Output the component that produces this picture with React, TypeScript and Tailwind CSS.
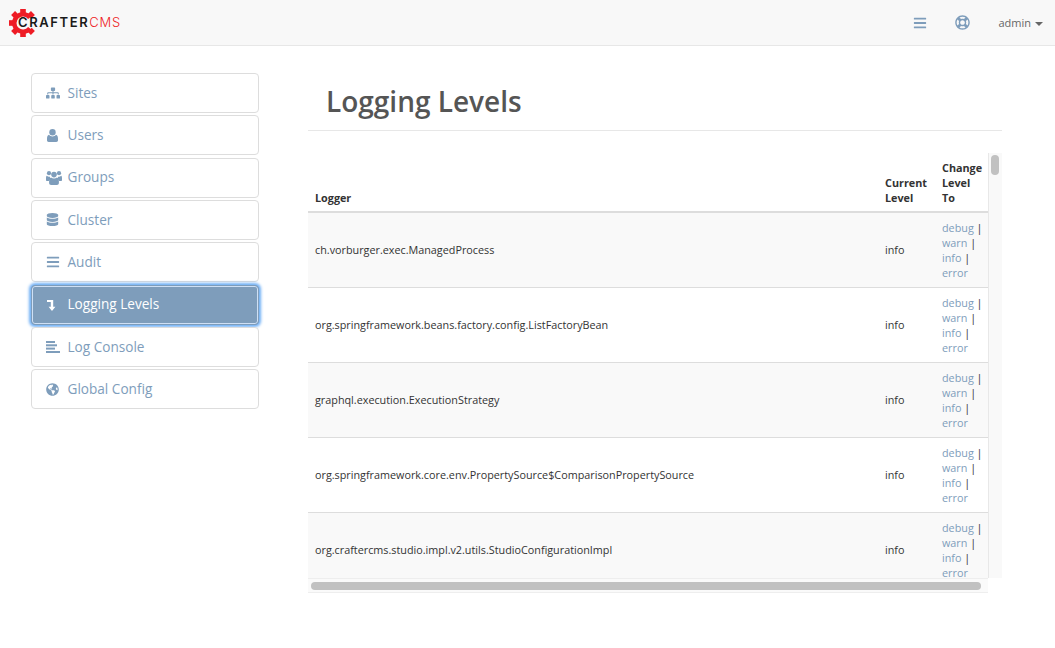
import React from "react";
import { FaSitemap, FaDatabase, FaBars, FaGlobeAmericas, FaRegLifeRing } from "react-icons/fa";

function UserIcon() {
  return (
    <svg width="11" height="13" viewBox="0 0 11 13" fill="currentColor" className="ml-[0.5px]">
      <circle cx="5.5" cy="3.2" r="3.2" />
      <path d="M2 5.8C3 7 4 7.4 5.5 7.4S8 7 9 5.8C10.3 6.2 11 7.6 11 9.8V11.3C11 12.3 10.3 13 9.3 13H1.7C.7 13 0 12.3 0 11.3V9.8C0 7.6.7 6.2 2 5.8Z" />
    </svg>
  );
}

function UsersIcon() {
  return (
    <svg width="16" height="14" viewBox="0 0 16 14" fill="currentColor">
      <circle cx="3" cy="2.2" r="2.1" />
      <circle cx="13" cy="2.2" r="2.1" />
      <circle cx="8" cy="3.6" r="2.8" />
      <path d="M.9 4.8C1.5 5.4 2.2 5.7 3 5.7c.5 0 .8 0 1 .1-.2.9.1 1.8.6 2.5C3.6 8.7 3 9.4 2.8 10H1C.4 10 0 9.6 0 9V7C0 6 .3 5.1.9 4.8ZM15.1 4.8C15.7 5.1 16 6 16 7V9c0 .6-.4 1-1 1H13.2c-.2-.6-.8-1.3-1.8-1.7.5-.7.8-1.6.6-2.5.2-.1.5-.1 1-.1.8 0 1.5-.3 2.1-.9Z" />
      <path d="M5 6.6C5.8 7.2 6.8 7.5 8 7.5S10.2 7.2 11 6.6c1.3.4 1.9 1.8 1.9 3.6v1.8c0 1.2-.8 2-2 2H5.1c-1.2 0-2-.8-2-2v-1.8c0-1.8.6-3.2 1.9-3.6Z" />
    </svg>
  );
}

function LevelDownIcon() {
  return (
    <svg width="9" height="12" viewBox="0 0 9 12" fill="currentColor" className="ml-[1px]">
      <path d="M0 1H6.2V7.8H8.4L5 12 1.6 7.8H3.8V3H0Z" />
    </svg>
  );
}

function LogIcon() {
  return (
    <svg width="14" height="12" viewBox="0 0 14 12" fill="currentColor">
      <rect x="0" y="0" width="9" height="2" />
      <rect x="0" y="3.3" width="11" height="2" />
      <rect x="0" y="6.6" width="9" height="2" />
      <rect x="0" y="10" width="14" height="2" />
    </svg>
  );
}

const icon14 = "text-[14px]";
const nav = [
  { label: "Sites", icon: <FaSitemap className={icon14} /> },
  { label: "Users", icon: <UserIcon /> },
  { label: "Groups", icon: <UsersIcon /> },
  { label: "Cluster", icon: <FaDatabase className="text-[13px]" /> },
  { label: "Audit", icon: <FaBars className={icon14} /> },
  { label: "Logging Levels", icon: <LevelDownIcon />, active: true },
  { label: "Log Console", icon: <LogIcon /> },
  { label: "Global Config", icon: <FaGlobeAmericas className="text-[13px]" /> },
];

const rows = [
  "ch.vorburger.exec.ManagedProcess",
  "org.springframework.beans.factory.config.ListFactoryBean",
  "graphql.execution.ExecutionStrategy",
  "org.springframework.core.env.PropertySource$ComparisonPropertySource",
  "org.craftercms.studio.impl.v2.utils.StudioConfigurationImpl",
];

function Gear() {
  const angles = [0, 45, 135, 180, 225, 270, 315];
  return (
    <svg width="28" height="28" viewBox="0 0 28 28" className="shrink-0">
      {angles.map((a) => (
        <rect key={a} x="11.2" y="0" width="5.6" height="4.5" fill="#ee1c25" transform={`rotate(${a} 14 14)`} />
      ))}
      <path d="M22.67 7.23A11 11 0 1 0 22.67 20.77L19.12 18A6.5 6.5 0 1 1 19.12 10Z" fill="#ee1c25" />
    </svg>
  );
}

export default function App() {
  return (
    <div className="w-[1055px] h-[648px] bg-white overflow-hidden text-[#555] font-['Open_Sans',sans-serif]">
      <header className="h-[46px] bg-[#f8f8f8] border-b border-[#e7e7e7] flex items-center pl-[9px] pr-[12px]">
        <div className="flex items-center">
          <Gear />
          <span className="ml-[-19px] font-['Inter',sans-serif] text-[13px] leading-none tracking-[1.6px] font-semibold text-[#1a1a1a]">CRAFTER</span>
          <span className="font-['Inter',sans-serif] text-[13px] leading-none tracking-[0.8px] font-light text-[#ee1c25]">CMS</span>
        </div>
        <div className="ml-auto flex items-center text-[#7e9dbb]">
          <FaBars className="text-[14px]" />
          <FaRegLifeRing className="text-[15px] ml-[28px]" />
          <span className="ml-[28px] text-[11px] leading-[15px] text-[#666]">admin</span>
          <span className="ml-[4px] mt-[2px] w-0 h-0 border-x-[4px] border-x-transparent border-t-[4px] border-t-[#666]" />
        </div>
      </header>

      <div className="flex pt-[27px] pl-[31px]">
        <nav className="w-[228px] flex flex-col gap-[2.33px] shrink-0">
          {nav.map(({ label, icon, active }) => (
            <div
              key={label}
              className={
                "h-[40px] flex items-center rounded-[4px] border pl-[14px] text-[13.6px] " +
                (active
                  ? "bg-[#7e9dbb] border-[#7e9dbb] text-white shadow-[0_0_0_1px_#cfe0f5_inset,0_0_3px_2px_#6fafF5]"
                  : "bg-white border-[#ddd] text-[#7e9dbb]")
              }
            >
              <span className="w-[21.5px] flex items-center">{icon}</span>
              <span className="pb-[0.5px]">{label}</span>
            </div>
          ))}
        </nav>

        <main className="ml-[49px] w-[694px]">
          <h1 className="h-[58px] pl-[18px] border-b border-[#e7e7e7] text-[28px] leading-[57px] font-semibold text-[#555]">
            Logging Levels
          </h1>
          <div className="mt-[22px] flex h-[425px]">
            <div className="w-[680px] overflow-hidden">
              <table className="w-[680px] table-fixed border-collapse text-[10.8px] leading-[15px] text-[#333]">
                <colgroup>
                  <col className="w-[570px]" />
                  <col className="w-[57px]" />
                  <col className="w-[53px]" />
                </colgroup>
                <thead>
                  <tr className="h-[59px] border-b-2 border-[#ddd] font-bold align-bottom">
                    <th className="pl-[7px] pb-[6px] text-left font-bold">Logger</th>
                    <th className="pl-[7px] pb-[6px] text-left font-bold">Current<br />Level</th>
                    <th className="pl-[7px] pb-[6px] text-left font-bold">Change<br />Level<br />To</th>
                  </tr>
                </thead>
                <tbody>
                  {rows.map((r, i) => (
                    <tr key={r} className={"h-[75px] border-b border-[#ddd] " + (i % 2 === 0 ? "bg-[#f9f9f9]" : "bg-white")}>
                      <td className="pl-[7px]">{r}</td>
                      <td className="pl-[7px]">info</td>
                      <td className="pl-[7px]">
                        <span className="text-[#7e9dbb]">debug</span> | <span className="text-[#7e9dbb]">warn</span> | <span className="text-[#7e9dbb]">info</span> | <span className="text-[#7e9dbb]">error</span>
                      </td>
                    </tr>
                  ))}
                </tbody>
              </table>
            </div>
            <div className="w-[14px] bg-[#f9f9f9] border-l border-[#e8e8e8] pt-[2px] pl-[2px]">
              <div className="w-[8px] h-[20px] rounded-full bg-[#c1c1c1]" />
            </div>
          </div>
          <div className="w-[680px] h-[15px] bg-[#fafafa] border-y border-[#eee] flex items-center pl-[3px]">
            <div className="w-[670px] h-[8px] rounded-full bg-[#c1c1c1]" />
          </div>
        </main>
      </div>
    </div>
  );
}
